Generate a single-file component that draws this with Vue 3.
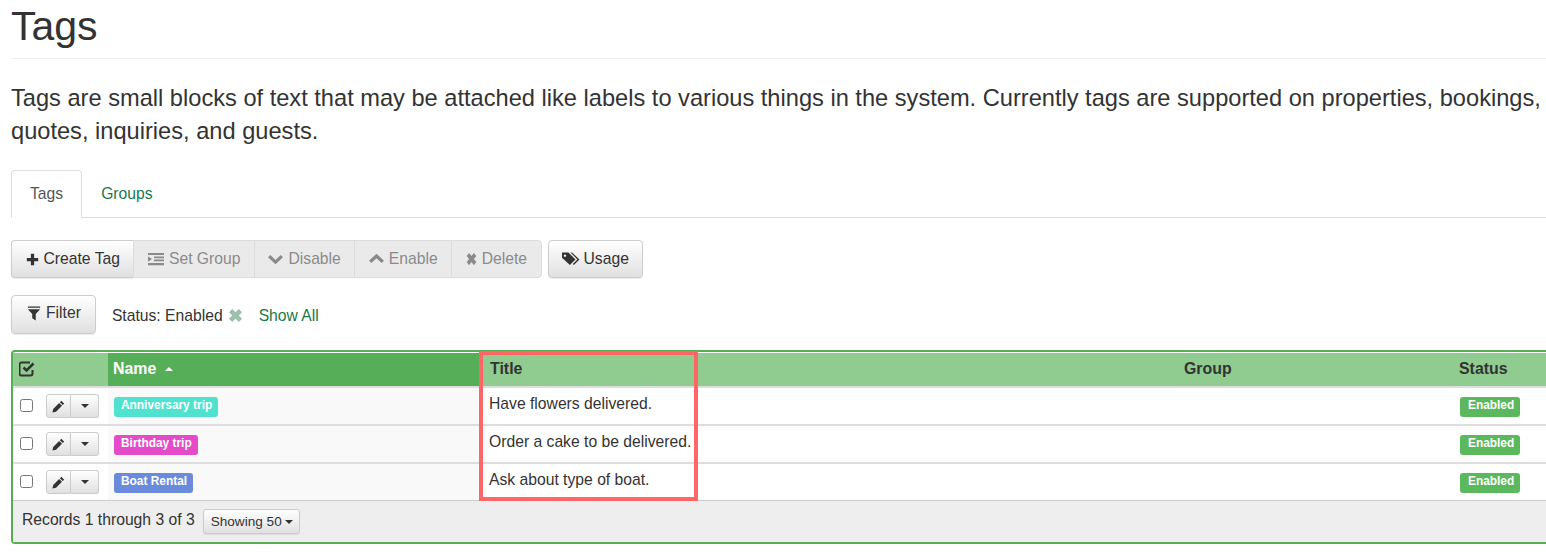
<template>
  <div class="page">
    <h1>Tags</h1>
    <p class="intro">
      Tags are small blocks of text that may be attached like labels to various things in the system. Currently tags are supported on properties, bookings, quotes, inquiries, and guests.
    </p>

    <div class="tabs">
      <a class="tab active">Tags</a>
      <a class="tab">Groups</a>
    </div>

    <div class="toolbar">
      <div class="btn-group">
        <button class="btn">
          <svg class="icon" width="13" height="13" viewBox="0 0 16 16"><path d="M6 1h4v5h5v4h-5v5H6v-5H1V6h5z" /></svg>
          Create Tag
        </button>
        <button v-for="b in disabledButtons" :key="b.label" class="btn disabled">
          <svg class="icon" :width="b.w" height="14" viewBox="0 0 16 16" preserveAspectRatio="none"><path :d="b.d" /></svg>
          {{ b.label }}
        </button>
      </div>
      <button class="btn single usage">
        <svg class="icon" width="18" height="16" viewBox="0 0 18 15"><path d="M0 1h6.500l7 7-5.600 5.600L0 6.200zM3 3a1.200 1.200 0 1 0 .01 0z" fill-rule="evenodd" /><path d="M8.500 1h1.500l7.500 7-5.600 5.600-1-1 4.500-4.600z" /></svg>
        Usage
      </button>
    </div>

    <div class="filters">
      <button class="btn single filter">
        <svg class="icon" width="14" height="17" viewBox="0 0 16 16"><path d="M1 0h14v1.500H1zM1 3h14l-5 5.500V16l-4-2.500v-5z" /></svg>
        Filter
      </button>
      <span class="status">Status: Enabled</span>
      <svg class="clear" width="15" height="15" viewBox="0 0 16 16"><path d="M4.500 1L8 4.500 11.500 1 15 4.500 11.500 8 15 11.500 11.500 15 8 11.500 4.500 15 1 11.500 4.500 8 1 4.500z" /></svg>
      <a class="show-all">Show All</a>
    </div>

    <div class="grid-wrap">
      <table class="grid">
        <colgroup>
          <col style="width: 95px" />
          <col style="width: 372px" />
          <col style="width: 695px" />
          <col style="width: 275px" />
          <col style="width: 200px" />
        </colgroup>
        <thead>
          <tr>
            <th class="check-col">
              <svg width="16" height="16" viewBox="0 0 16 16" fill="none" stroke="#333" stroke-width="2"><path d="M13.500 9v3.500a2 2 0 0 1-2 2h-9a2 2 0 0 1-2-2v-9a2 2 0 0 1 2-2H11" /><path d="M4.500 6.500l3 3L14.500 2.500" stroke-width="2.600" /></svg>
            </th>
            <th class="sorted">Name <span class="sort-up"></span></th>
            <th class="title-head">Title</th>
            <th>Group</th>
            <th>Status</th>
          </tr>
        </thead>
        <tbody>
          <tr v-for="tag in tags" :key="tag.name">
            <td>
              <div class="row-actions">
                <input type="checkbox" />
                <div class="mini-group">
                  <button class="mini">
                    <svg class="icon" width="13" height="13" viewBox="0 0 16 16"><path d="M11.500 1L15 4.500l-1.800 1.800-3.500-3.500zM8.800 3.700l3.500 3.500L5 14.500l-4.500 1 1-4.500z" /></svg>
                  </button>
                  <button class="mini caret-btn"><span class="caret"></span></button>
                </div>
              </div>
            </td>
            <td class="name-cell">
              <span class="label" :style="{ background: tag.color }">{{ tag.name }}</span>
            </td>
            <td class="title-cell">{{ tag.title }}</td>
            <td></td>
            <td class="status-cell"><span class="label enabled">Enabled</span></td>
          </tr>
        </tbody>
      </table>
      <div class="grid-footer">
        <span class="records">Records 1 through 3 of 3</span>
        <button class="btn showing">Showing 50 <span class="caret"></span></button>
      </div>
      <div class="highlight"></div>
    </div>
  </div>
</template>

<script setup>
const disabledButtons = [
  { label: 'Set Group', w: 16, d: 'M0 1h16v2.500H0zM6 5h10v2H6zM6 8.500h10v2H6zM0 12.500h16V15H0zM0 5l4 3-4 3z' },
  { label: 'Disable', w: 15, d: 'M0 6l2.500-2.500L8 9l5.500-5.500L16 6l-8 8z' },
  { label: 'Enable', w: 15, d: 'M0 10l2.500 2.500L8 7l5.500 5.500L16 10 8 2z' },
  { label: 'Delete', w: 11, d: 'M4.500 1L8 4.500 11.500 1 15 4.500 11.500 8 15 11.500 11.500 15 8 11.500 4.500 15 1 11.500 4.500 8 1 4.500z' },
];

const tags = [
  { name: 'Anniversary trip', title: 'Have flowers delivered.', color: '#4fe3cf' },
  { name: 'Birthday trip', title: 'Order a cake to be delivered.', color: '#e54ac8' },
  { name: 'Boat Rental', title: 'Ask about type of boat.', color: '#6a8bdc' },
];
</script>

<style>
html, body {
  overflow: hidden;
  background: #fff;
}
</style>

<style scoped>
.page {
  width: 1700px;
  padding-left: 11px;
  font-family: "Liberation Sans", Arial, sans-serif;
  font-size: 15.7px;
  color: #333;
}
h1 {
  margin: 0;
  padding-bottom: 6px;
  font-size: 41px;
  font-weight: 400;
  line-height: 52px;
  border-bottom: 1px solid #eee;
}
.intro {
  width: 1535px;
  margin: 23px 0 22px;
  font-size: 23.64px;
  line-height: 33px;
}
.tabs {
  display: flex;
  height: 48px;
  box-sizing: border-box;
  border-bottom: 1px solid #ddd;
}
.tab {
  height: 48px;
  box-sizing: border-box;
  padding: 13px 18px 0 18px;
  line-height: 19px;
  color: #18794a;
  border: 1px solid transparent;
  border-radius: 4px 4px 0 0;
}
.tab.active {
  color: #555;
  background: #fff;
  border-color: #ddd #ddd #fff;
}
.toolbar {
  display: flex;
  gap: 6px;
  margin-top: 22px;
}
.btn-group {
  display: flex;
}
.btn {
  display: inline-flex;
  align-items: center;
  gap: 5px;
  height: 38px;
  box-sizing: border-box;
  padding: 0 13.5px;
  font: inherit;
  color: #333;
  background: linear-gradient(#fff, #e0e0e0);
  border: 1px solid #ccc;
  border-right-width: 0;
  box-shadow: 0 1px 1px rgba(0, 0, 0, 0.08);
}
.btn-group .btn:first-child {
  border-radius: 4px 0 0 4px;
}
.btn-group .btn:last-child {
  border-right-width: 1px;
  border-radius: 0 4px 4px 0;
}
.btn.disabled {
  color: #8a8a8a;
  background: #eaeaea;
  border-color: #dcdcdc;
  box-shadow: none;
}
.btn.single {
  border-right-width: 1px;
  border-radius: 4px;
}
.btn.usage {
  gap: 4px;
  padding: 0 13px;
}
.icon {
  fill: currentColor;
  flex: none;
}
.filters {
  display: flex;
  align-items: center;
  margin-top: 17px;
  height: 39px;
}
.btn.filter {
  height: 39px;
  padding: 0 14px 3px 15px;
  margin-right: 16px;
}
.status {
  margin-top: 2px;
}
.clear {
  margin: 2px 17px 0 5px;
  fill: #9fbfae;
}
.show-all {
  margin-top: 2px;
  margin-left: -1px;
  color: #18794a;
}
.grid-wrap {
  position: relative;
  width: 1660px;
  margin-top: 16px;
  padding-top: 1px;
  border: 2px solid #57ae59;
  border-radius: 4px;
}
.grid {
  width: 1637px;
  table-layout: fixed;
  border-collapse: separate;
  border-spacing: 0;
}
th {
  box-sizing: border-box;
  height: 35px;
  padding: 0 9px 2px;
  text-align: left;
  font-size: 15.9px;
  font-weight: 700;
  background: #90cb90;
  border-bottom: 2px solid #ddd;
  background-clip: padding-box;
}
th.check-col {
  padding-left: 6px;
}
th.check-col svg {
  display: block;
}
th.sorted {
  padding-left: 5px;
  color: #fff;
  background-color: #56ae58;
}
th.title-head {
  padding-left: 10px;
}
.sort-up {
  display: inline-block;
  margin: 0 0 3px 4px;
  border-left: 4px solid transparent;
  border-right: 4px solid transparent;
  border-bottom: 4px solid #fff;
}
td {
  box-sizing: border-box;
  height: 38px;
  padding: 0 9px;
  border-bottom: 2px solid #ddd;
  background-clip: padding-box;
}
tbody tr:last-child td {
  height: 36px;
  border-bottom: 0;
}
td:first-child {
  padding: 0 0 0 7px;
}
td.name-cell {
  padding-left: 6px;
  background-color: #f9f9f9;
}
td.title-cell {
  padding-bottom: 4px;
}
td.status-cell {
  padding-left: 10px;
}
.row-actions {
  display: flex;
  align-items: center;
  gap: 13px;
}
.row-actions input {
  width: 13px;
  height: 13px;
  margin: 0 0 2px;
}
.mini-group {
  display: flex;
}
.mini {
  display: flex;
  align-items: center;
  justify-content: center;
  width: 25px;
  height: 24px;
  padding: 0;
  color: #333;
  background: linear-gradient(#fff, #e0e0e0);
  border: 1px solid #ccc;
  border-radius: 3px 0 0 3px;
}
.mini.caret-btn {
  width: 28px;
  border-left: 0;
  border-radius: 0 3px 3px 0;
}
.caret {
  display: inline-block;
  border-left: 4px solid transparent;
  border-right: 4px solid transparent;
  border-top: 4px solid #333;
}
.label {
  display: inline-block;
  height: 20px;
  box-sizing: border-box;
  margin-top: 1px;
  padding: 0 6px 0 7px;
  font-size: 11.9px;
  font-weight: 700;
  line-height: 17px;
  color: #fff;
  border-radius: 3px;
  vertical-align: middle;
}
.label.enabled {
  padding: 0 6px 0 8px;
  background: #5cb85c;
}
.grid-footer {
  display: flex;
  align-items: center;
  gap: 8px;
  height: 42px;
  box-sizing: border-box;
  padding: 0 0 0 9px;
  font-size: 15.7px;
  background: #eee;
  border-top: 1px solid #ccc;
}
.records {
  margin-bottom: 3px;
}
.btn.showing {
  height: 25px;
  padding: 0 6px 0 7px;
  font-size: 13.6px;
  gap: 3px;
  border-right-width: 1px;
  border-radius: 3px;
}
.highlight {
  position: absolute;
  top: -1px;
  left: 466px;
  width: 219px;
  height: 150px;
  box-sizing: border-box;
  border: 4px solid #ff6666;
  pointer-events: none;
}
</style>
